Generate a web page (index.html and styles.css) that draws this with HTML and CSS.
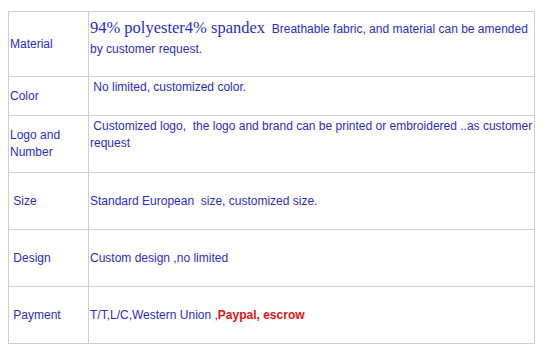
FILE: index.html
```html
<!DOCTYPE html>
<html>
<head>
<meta charset="utf-8">
<link rel="stylesheet" href="styles.css">
</head>
<body>
<table class="spec">
  <tr class="r1">
    <td class="label">Material</td>
    <td class="val top"><span class="serif">94% polyester4% spandex</span>&nbsp; Breathable fabric, and material can be amended by customer request.</td>
  </tr>
  <tr class="r2">
    <td class="label">Color</td>
    <td class="val top">&nbsp;No limited, customized color.</td>
  </tr>
  <tr class="r3">
    <td class="label">Logo and Number</td>
    <td class="val top">&nbsp;Customized logo,&nbsp; the logo and brand can be printed or embroidered ..as customer request</td>
  </tr>
  <tr class="r3">
    <td class="label">&nbsp;Size</td>
    <td class="val">Standard European&nbsp; size, customized size.</td>
  </tr>
  <tr class="r3">
    <td class="label">&nbsp;Design</td>
    <td class="val">Custom design ,no limited</td>
  </tr>
  <tr class="r3">
    <td class="label">&nbsp;Payment</td>
    <td class="val">T/T,L/C,Western Union ,<span class="red">Paypal, escrow</span></td>
  </tr>
</table>
</body>
</html>
```

FILE: styles.css
```css
body {
  margin: 11px 8px 8px 8px;
  background: #fff;
  font-family: "Liberation Sans", Arial, sans-serif;
  font-size: 12px;
  color: #2b2bcc;
}
.spec {
  border-collapse: collapse;
  width: 527px;
}
.spec td {
  border: 1px solid #cfcfcf;
  padding: 0 0 0 1px;
  line-height: 17px;
  vertical-align: middle;
}
.label {
  width: 78px;
}
.val.top {
  vertical-align: top;
  padding-top: 2px;
}
.r1 { height: 65px; }
.r1 .val { line-height: 20px; padding-top: 6px; }
.r2 { height: 39px; }
.r3 { height: 57px; }
.serif {
  font-family: "Liberation Serif", Georgia, serif;
  font-size: 16.5px;
}
.red {
  color: #e51212;
  font-weight: bold;
}
```
